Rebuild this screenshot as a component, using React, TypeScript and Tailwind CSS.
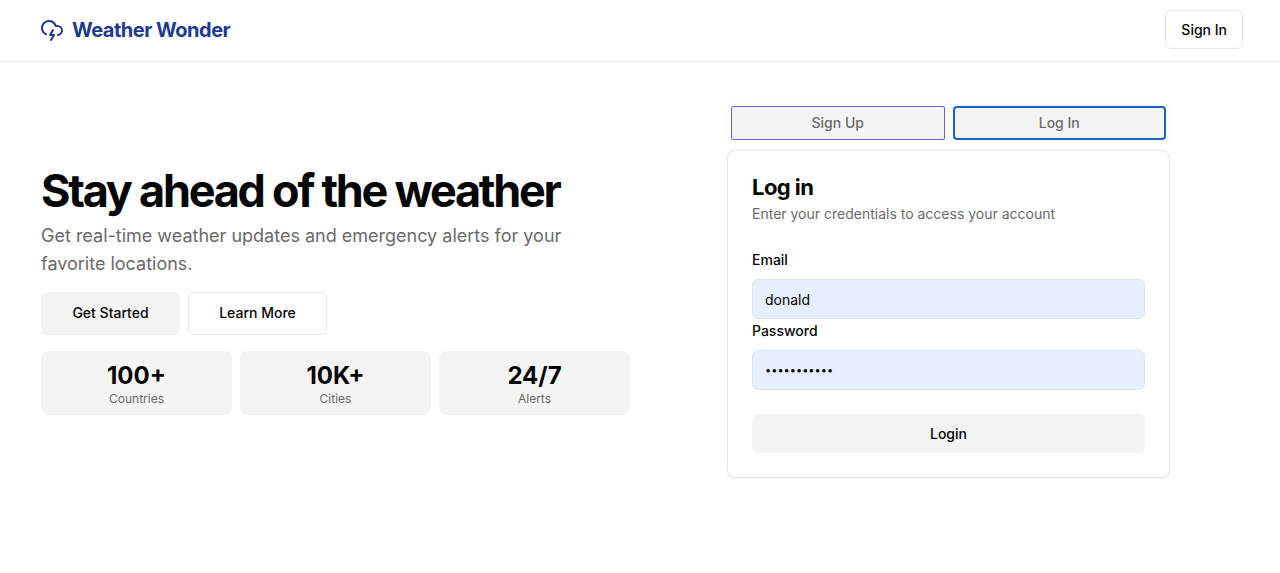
import { useState } from "react";
import { CloudLightning } from "lucide-react";

const stats = [
  { value: "100+", label: "Countries" },
  { value: "10K+", label: "Cities" },
  { value: "24/7", label: "Alerts" },
];

function Header() {
  return (
    <header className="flex items-center justify-between border-b border-[#e6e6e6] pt-[10px] pr-[37px] pb-[12px] pl-10">
      <a href="#" className="flex items-center gap-2 text-[#1e3a8f]">
        <CloudLightning className="size-6" strokeWidth={2} />
        <span className="text-xl leading-7 font-bold tracking-tight">Weather Wonder</span>
      </a>
      <button className="h-[39px] rounded-md border border-[#e8e8e8] px-[15px] text-sm font-medium">Sign In</button>
    </header>
  );
}

function Hero() {
  return (
    <section className="flex flex-col">
      <div className="flex flex-col gap-2 pt-[2px]">
        <h1 className="text-[45px] leading-[46px] font-bold tracking-tighter">Stay ahead of the weather</h1>
        <p className="max-w-[560px] text-lg leading-7 text-[#6a6a6a]">
          Get real-time weather updates and emergency alerts for your favorite locations.
        </p>
      </div>
      <div className="mt-[14px] flex gap-2">
        <button className="h-[43px] w-[139px] rounded-md bg-[#f4f4f4] text-sm font-medium">Get Started</button>
        <button className="h-[43px] w-[139px] rounded-md border border-[#e8e8e8] text-sm font-medium">
          Learn More
        </button>
      </div>
      <dl className="mt-4 grid grid-cols-3 gap-2">
        {stats.map((s) => (
          <div
            key={s.label}
            className="flex flex-col-reverse items-center rounded-lg bg-[#f4f4f4] px-2 pt-[10px] pb-2"
          >
            <dt className="text-xs leading-4 text-[#6a6a6a]">{s.label}</dt>
            <dd className="text-2xl leading-[30px] font-bold">{s.value}</dd>
          </div>
        ))}
      </dl>
    </section>
  );
}

function LoginCard() {
  const [email, setEmail] = useState("donald");
  const [password, setPassword] = useState("sunnyskies1");
  return (
    <form
      onSubmit={(e) => e.preventDefault()}
      className="rounded-lg border border-[#e4e4e4] bg-white p-6 shadow-xs"
    >
      <h2 className="text-[22px] leading-6 font-bold tracking-tight">Log in</h2>
      <p className="mt-[5px] text-sm leading-5 text-[#6a6a6a]">Enter your credentials to access your account</p>
      <div className="mt-6 flex flex-col">
        <label htmlFor="email" className="mb-[7px] text-sm leading-6 font-medium">Email</label>
        <input
          id="email"
          type="text"
          value={email}
          onChange={(e) => setEmail(e.target.value)}
          className="h-10 w-full rounded-md border border-[#dbe4f0] bg-[#e6effd] px-3 text-sm outline-none"
        />
        <label htmlFor="password" className="mb-[7px] text-sm leading-6 font-medium">Password</label>
        <input
          id="password"
          type="password"
          value={password}
          onChange={(e) => setPassword(e.target.value)}
          className="h-10 w-full rounded-md border border-[#dbe4f0] bg-[#e6effd] px-3 text-[11px] outline-none"
        />
      </div>
      <button className="mt-6 h-[39px] w-full rounded-md bg-[#f4f4f4] text-sm font-medium">Login</button>
    </form>
  );
}

function AuthPanel() {
  return (
    <section className="mx-auto w-full max-w-[443px]">
      <div role="tablist" className="mb-[6px] grid grid-cols-2 gap-2 rounded-md bg-[#fcfcfc] p-1">
        <button
          role="tab"
          aria-selected={false}
          className="h-[34px] rounded-xs border border-[#6a5fd8] bg-[#f4f4f4] text-sm font-medium text-[#6a6a6a]"
        >
          Sign Up
        </button>
        <button
          role="tab"
          aria-selected={true}
          className="h-[34px] rounded-sm border-2 border-[#1a62c6] bg-[#f4f4f4] text-sm font-medium text-[#6a6a6a]"
        >
          Log In
        </button>
      </div>
      <LoginCard />
    </section>
  );
}

export default function App() {
  return (
    <div className="min-h-screen bg-white font-['Inter',sans-serif] text-[#050505]">
      <Header />
      <main className="grid items-center gap-6 py-10 pr-[37px] pl-[41px] md:grid-cols-2">
        <Hero />
        <AuthPanel />
      </main>
    </div>
  );
}
